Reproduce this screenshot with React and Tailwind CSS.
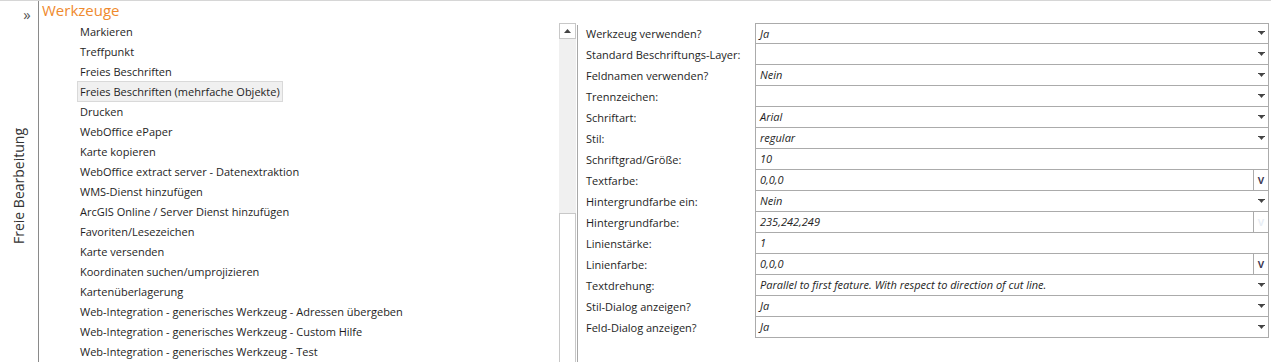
import React from 'react';

const TOOLS = [
  'Markieren',
  'Treffpunkt',
  'Freies Beschriften',
  'Freies Beschriften (mehrfache Objekte)',
  'Drucken',
  'WebOffice ePaper',
  'Karte kopieren',
  'WebOffice extract server - Datenextraktion',
  'WMS-Dienst hinzufügen',
  'ArcGIS Online / Server Dienst hinzufügen',
  'Favoriten/Lesezeichen',
  'Karte versenden',
  'Koordinaten suchen/umprojizieren',
  'Kartenüberlagerung',
  'Web-Integration - generisches Werkzeug - Adressen übergeben',
  'Web-Integration - generisches Werkzeug - Custom Hilfe',
  'Web-Integration - generisches Werkzeug - Test',
];

// kind: 'select' | 'text' | 'color' | 'colorOff'
const PROPS = [
  { label: 'Werkzeug verwenden?', value: 'Ja', kind: 'select' },
  { label: 'Standard Beschriftungs-Layer:', value: '', kind: 'select' },
  { label: 'Feldnamen verwenden?', value: 'Nein', kind: 'select' },
  { label: 'Trennzeichen:', value: '', kind: 'select' },
  { label: 'Schriftart:', value: 'Arial', kind: 'select' },
  { label: 'Stil:', value: 'regular', kind: 'select' },
  { label: 'Schriftgrad/Größe:', value: '10', kind: 'text' },
  { label: 'Textfarbe:', value: '0,0,0', kind: 'color' },
  { label: 'Hintergrundfarbe ein:', value: 'Nein', kind: 'select' },
  { label: 'Hintergrundfarbe:', value: '235,242,249', kind: 'colorOff' },
  { label: 'Linienstärke:', value: '1', kind: 'text' },
  { label: 'Linienfarbe:', value: '0,0,0', kind: 'color' },
  {
    label: 'Textdrehung:',
    value: 'Parallel to first feature. With respect to direction of cut line.',
    kind: 'select',
  },
  { label: 'Stil-Dialog anzeigen?', value: 'Ja', kind: 'select' },
  { label: 'Feld-Dialog anzeigen?', value: 'Ja', kind: 'select' },
];

function DropArrow() {
  return (
    <svg width="7" height="5" viewBox="0 0 7 5" className="mr-[3px] shrink-0">
      <rect x="0" y="0" width="7" height="1" fill="#444" />
      <polygon points="1,1 6,1 3.5,4" fill="#444" />
    </svg>
  );
}

function PropRow({ p, first }) {
  return (
    <div className="flex h-[21px] items-stretch">
      <div className="flex w-[177px] shrink-0 items-center pl-[8px] text-[#1e1e1e]">{p.label}</div>
      <div
        className={`flex flex-1 items-center border-x border-b border-[#ababab] ${first ? 'border-t' : ''}`}
      >
        <span className="flex-1 truncate pl-[4px] leading-[16px] italic text-[#1e1e1e]">{p.value}</span>
        {p.kind === 'select' && <DropArrow />}
        {(p.kind === 'color' || p.kind === 'colorOff') && (
          <span
            className={`flex h-full w-[15px] items-center justify-center border-l border-[#ababab] text-[12px] font-semibold ${
              p.kind === 'color' ? 'text-[#3b3550]' : 'text-[#e8eef5]'
            }`}
          >
            v
          </span>
        )}
      </div>
    </div>
  );
}

export default function App() {
  return (
    <div
      className="flex h-[362px] w-[1271px] overflow-hidden border-t border-[#d6d6d6] bg-white text-[11px] leading-none"
      style={{ fontFamily: '"Open Sans", "Noto Sans", sans-serif' }}
    >
      {/* collapsed side bar */}
      <div className="flex w-[39px] shrink-0 flex-col items-center border-r border-[#8a8a8a]">
        <span className="mt-[6px] ml-[16px] text-[15px] text-[#555]">»</span>
        <div className="flex flex-1 items-center justify-center pb-[12px]">
          <span className="-rotate-90 whitespace-nowrap text-[14px] text-[#333]">Freie Bearbeitung</span>
        </div>
      </div>

      <div className="flex flex-1 flex-col">
        <div className="h-[20px] pl-[3px] pt-[2px] text-[15px] text-[#ef8a2e]">Werkzeuge</div>

        <div className="flex flex-1">
          {/* tool list */}
          <div className="w-[520px] shrink-0 pl-[38px]">
            {TOOLS.map((t, i) => (
              <div key={t} className="flex h-[20px] items-center">
                <span
                  className={`border px-[2px] py-[3px] leading-[13px] ${
                    i === 3 ? 'border-[#d9d9d9] bg-[#f0f0f0]' : 'border-transparent'
                  } text-[#1e1e1e]`}
                >
                  {t}
                </span>
              </div>
            ))}
          </div>

          {/* scroll bar */}
          <div className="flex w-[17px] shrink-0 flex-col pt-[2px]">
            <div className="flex h-[16px] items-center justify-center border border-[#c8c8c8] bg-white">
              <svg width="7" height="4" viewBox="0 0 7 4">
                <polygon points="0,4 7,4 3.5,0" fill="#444" />
              </svg>
            </div>
            <div className="h-[174px] bg-[#f0f0f0]" />
            <div className="flex-1 border-x border-t border-[#c8c8c8] bg-white" />
          </div>

          {/* properties */}
          <div className="ml-[1px] flex flex-1 flex-col pt-[4px]">
            <div className="flex flex-1 flex-col border-l border-[#a8a8a8] pr-[2px]">
              <div className="-mt-[2px]">
                {PROPS.map((p, i) => (
                  <PropRow key={p.label} p={p} first={i === 0} />
                ))}
              </div>
            </div>
          </div>
        </div>
      </div>
    </div>
  );
}
